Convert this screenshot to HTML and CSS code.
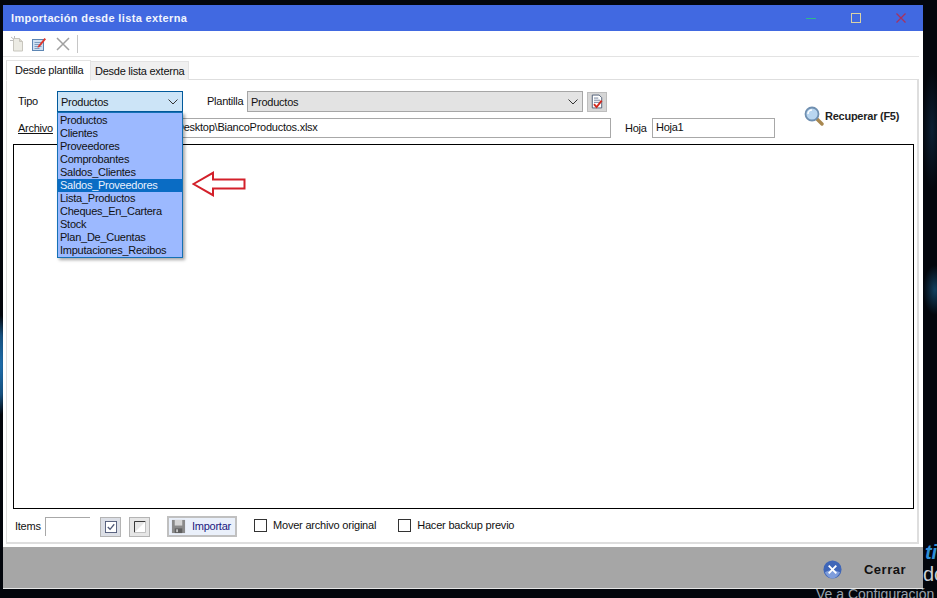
FILE: index.html
```html
<!DOCTYPE html>
<html lang="es">
<head>
<meta charset="utf-8">
<title>Importación desde lista externa</title>
<link rel="stylesheet" href="styles.css">
</head>
<body>
<div class="desktop">
  <span class="desk-ti">ti</span>
  <span class="desk-do">do</span>
  <span class="desk-ve">Ve a Configuración</span>
  <div class="window">
    <header class="titlebar">
      <span class="title">Importación desde lista externa</span>
      <div class="winctl">
        <svg class="ctl" viewBox="0 0 12 12"><path d="M1 6.500h10" stroke="#2fb98a" stroke-width="1"/></svg>
        <svg class="ctl" viewBox="0 0 12 12"><rect x="1.500" y="1.500" width="9" height="9" fill="none" stroke="#d9d2a6" stroke-width="1"/></svg>
        <svg class="ctl" viewBox="0 0 12 12"><path d="M1.500 1.500l9 9M10.500 1.500l-9 9" stroke="#a8325e" stroke-width="1.300"/></svg>
      </div>
    </header>
    <div class="toolbar">
      <svg class="tool" viewBox="0 0 16 16"><path d="M3.500 2.500h6l3 3v9.500h-9z" fill="#ecebe4" stroke="#c8c6be"/><path d="M9.500 2.500v3h3" fill="#dad8cf" stroke="#c8c6be"/><path d="M1 1l2.500 2M4.500 0v2.500M0 4.500h3" stroke="#bdbdbd"/></svg>
      <svg class="tool" viewBox="0 0 16 16"><rect x="1.500" y="3.500" width="11" height="11" fill="#cfe0f2" stroke="#5d86b4"/><path d="M3.500 6.500h7M3.500 8.500h7M3.500 10.500h7M3.500 12.500h5" stroke="#7d9cc0"/><path d="M7 10l6.500-8 1.500 1.200L8.500 11l-2 .8z" fill="#e0352b"/></svg>
      <svg class="tool tool-x" viewBox="0 0 16 16"><path d="M2 2l12 12M14 2L2 14" stroke="#a0a0a0" stroke-width="1.500"/></svg>
      <span class="tool-sep"></span>
    </div>
    <div class="tabs">
      <span class="tab tab-on">Desde plantilla</span>
      <span class="tab">Desde lista externa</span>
    </div>
    <main class="panel">
      <div class="head">
        <div class="fields">
          <div class="row row-top">
            <label class="lbl lbl-tipo">Tipo</label>
            <div class="combo combo-active"><span>Productos</span><svg class="chev" viewBox="0 0 10 6"><path d="M.5.5L5 5 9.500.5" fill="none" stroke="#333"/></svg></div>
            <label class="lbl lbl-plantilla">Plantilla</label>
            <div class="combo combo-gray"><span>Productos</span><svg class="chev" viewBox="0 0 10 6"><path d="M.5.5L5 5 9.500.5" fill="none" stroke="#333"/></svg></div>
            <button class="mini-btn">
              <svg class="mini-ico" viewBox="0 0 14 16"><path d="M1.500.5h8l3 3v12h-11z" fill="#fff" stroke="#3f4f6a"/><path d="M3.500 4h5M3.500 6.500h7M3.500 9h7" stroke="#5f7090"/><path d="M3.500 11l3 3.500L12.500 7" fill="none" stroke="#d2281e" stroke-width="2.200"/></svg>
            </button>
          </div>
          <div class="row row-file">
            <label class="lbl lbl-archivo">Archivo</label>
            <div class="input input-file">C:\Users\Administrador\Desktop\BiancoProductos.xlsx</div>
            <label class="lbl lbl-hoja">Hoja</label>
            <div class="input input-hoja">Hoja1</div>
          </div>
        </div>
        <div class="recuperar">
          <svg class="rec-ico" viewBox="0 0 20 20"><path d="M12 12l6 6" stroke="#a8874f" stroke-width="3.400" stroke-linecap="round"/><circle cx="8" cy="8" r="6.500" fill="#b9d6f0" stroke="#6f8fb0" stroke-width="1.800"/><path d="M4 8a4 4 0 0 1 4-4" fill="none" stroke="#fff" stroke-width="1.500"/></svg>
          <span>Recuperar (F5)</span>
        </div>
      </div>
      <div class="grid-box"></div>
      <div class="foot">
        <label class="lbl lbl-items">Items</label>
        <div class="items-input"></div>
        <button class="sq-btn"><svg class="sq-ico" viewBox="0 0 13 13"><rect x=".5" y=".5" width="12" height="12" fill="#fff" stroke="#505a78"/><path d="M3 6.500l2.500 2.500L10 3.500" fill="none" stroke="#505a78" stroke-width="1.400"/></svg></button>
        <button class="sq-btn sq-btn-2"><svg class="sq-ico" viewBox="0 0 13 13"><path d="M.5 12.500V.5h12" fill="none" stroke="#222"/><path d="M.5 12.500h12V.5" fill="#fff" stroke="#bbb"/></svg></button>
        <button class="import-btn">
          <svg class="imp-ico" viewBox="0 0 16 16"><path d="M1 1h14v14H1z" fill="#8a8a8a"/><path d="M4 1h8v6H4z" fill="#d5d5d5"/><path d="M4 10h8v5H4z" fill="#5f5f5f"/><path d="M5.500 11h2v3h-2z" fill="#c8c8c8"/></svg>
          <span>Importar</span>
        </button>
        <span class="check"></span>
        <span class="check-text">Mover archivo original</span>
        <span class="check check-2"></span>
        <span class="check-text">Hacer backup previo</span>
      </div>
    </main>
    <footer class="bottom">
      <svg class="close-ico" viewBox="0 0 20 20"><circle cx="10" cy="10" r="9.500" fill="#3f66b8"/><path d="M2 13c4-3 10-3 16 0-2 4-5 6.500-8 6.500S3.500 17 2 13z" fill="#7f9ddb"/><path d="M6 6l8 8M14 6l-8 8" stroke="#fff" stroke-width="2"/></svg>
      <span class="close-text">Cerrar</span>
    </footer>
  </div>
  <ul class="dropdown">
    <li>Productos</li>
    <li>Clientes</li>
    <li>Proveedores</li>
    <li>Comprobantes</li>
    <li>Saldos_Clientes</li>
    <li class="sel">Saldos_Proveedores</li>
    <li>Lista_Productos</li>
    <li>Cheques_En_Cartera</li>
    <li>Stock</li>
    <li>Plan_De_Cuentas</li>
    <li>Imputaciones_Recibos</li>
  </ul>
  <svg class="arrow" viewBox="0 0 54 26"><path d="M1.500 13L21 1.800v6.700h31.500v9H21v6.700z" fill="#fff" stroke="#d3202a" stroke-width="2"/></svg>
</div>
</body>
</html>
```
FILE: styles.css
```css
* { box-sizing: border-box; }
html, body { margin: 0; padding: 0; }
body { width: 937px; height: 598px; overflow: hidden; font-family: "Liberation Sans", Arial, sans-serif; font-size: 11px; letter-spacing: -.25px; color: #111; }
.desktop {
  position: relative; width: 937px; height: 598px; overflow: hidden;
  padding: 5px 14px 9px 3px; display: flex;
  background:
    radial-gradient(ellipse 6px 50px at 1px 365px, #1e6fae 0, rgba(30,111,174,.7) 60%, transparent 100%),
    radial-gradient(ellipse 12px 25px at 935px 290px, #12405f 0, transparent 100%),
    radial-gradient(ellipse 10px 60px at 932px 130px, #0c1f33 0, transparent 100%),
    #03060c;
}
.desk-ti { position: absolute; left: 925px; top: 541px; font: italic bold 20px "Liberation Sans", sans-serif; color: #2f8fd6; }
.desk-do { position: absolute; left: 923px; top: 563px; font-size: 20px; letter-spacing: 0; color: #c9ced6; }
.desk-ve { position: absolute; left: 816px; top: 586px; font-size: 14px; letter-spacing: 0; color: #9aa3ad; white-space: nowrap; }
.window { position: relative; width: 920px; height: 584px; background: #fff; display: flex; flex-direction: column; }
.titlebar { height: 26px; flex: none; background: #4169e1; display: flex; align-items: center; padding-left: 8px; }
.title { color: #f2f5fd; font-weight: bold; font-size: 11px; letter-spacing: .36px; }
.winctl { margin-left: auto; display: flex; gap: 33px; margin-right: 16px; }
.ctl { width: 12px; height: 12px; display: block; }
.toolbar { height: 26px; flex: none; display: flex; align-items: center; padding-left: 7px; gap: 5px; border-bottom: 1px solid #e3e3e3; margin-right: 4px; }
.tool { width: 16px; height: 16px; display: block; }
.tool-x { margin-left: 3px; }
.tool-sep { width: 1px; height: 18px; background: #c6c6c6; margin-left: 1px; }
.tabs { height: 23px; flex: none; display: flex; align-items: flex-end; padding-left: 3px; position: relative; z-index: 1; margin-bottom: -1px; }
.tab { height: 19px; padding: 3px 4px 0 4px; background: #f0f0f0; border: 1px solid #e3e3e3; border-bottom: none; border-left: none; width: 98px; white-space: nowrap; }
.tab-on { height: 21px; width: 85px; padding: 3px 0 0 8px; background: #fff; border-left: 1px solid #dcdcdc; border-bottom: 1px solid #fff; margin-bottom: -1px; }
.panel { flex: 1; min-height: 0; margin: 0 4px 3px 3px; border: 1px solid #dedede; border-width: 1px 2px 2px 1px; padding: 11px 0 0 6px; display: flex; flex-direction: column; background: #fff; }
.head { display: flex; height: 53px; flex: none; position: relative; }
.fields { width: 770px; flex: none; display: flex; flex-direction: column; gap: 6px; }
.row { display: flex; align-items: center; }
.row-top { height: 21px; }
.row-file { height: 20px; }
.lbl { display: block; white-space: nowrap; }
.lbl-tipo { width: 44px; padding-left: 5px; position: relative; top: -1px; }
.lbl-plantilla { margin-left: 24px; width: 40px; position: relative; top: -1px; }
.combo { height: 21px; display: flex; align-items: center; justify-content: space-between; padding: 0 4px 0 3px; }
.combo-active { width: 126px; background: #cce4f7; border: 1px solid #015a9c; }
.combo-gray { width: 336px; background: #e3e3e3; border: 1px solid #a6a6a6; }
.chev { width: 10px; height: 6px; display: block; }
.mini-btn { width: 20px; height: 20px; margin-left: 4px; padding: 0; background: #d6d6d6; border: 1px solid #bdbdbd; display: flex; align-items: center; justify-content: center; }
.mini-ico { width: 12px; height: 15px; display: block; }
.lbl-archivo { width: 44px; padding-left: 5px; text-decoration: underline; }
.input { height: 20px; border: 1px solid #a8a8a8; background: #fff; padding: 2px 0 0 3px; white-space: nowrap; overflow: hidden; }
.input-file { width: 554px; padding-left: 7px; }
.lbl-hoja { margin-left: 14px; width: 27px; }
.input-hoja { width: 123px; }
.recuperar { position: absolute; left: 791px; top: 15px; display: flex; align-items: center; gap: 1px; font-weight: bold; font-size: 11px; color: #1f1f1f; white-space: nowrap; }
.rec-ico { width: 20px; height: 20px; display: block; }
.grid-box { flex: none; height: 365px; width: 901px; border: 1px solid #000; background: #fff; }
.foot { flex: none; display: flex; align-items: center; height: 33px; padding-top: 2px; }
.lbl-items { width: 32px; padding-left: 2px; position: relative; top: -1px; }
.items-input { width: 45px; height: 19px; border-top: 1px solid #a8a8a8; border-left: 1px solid #a8a8a8; }
.sq-btn { width: 21px; height: 20px; margin-left: 10px; padding: 0; background: #dcdfe6; border: 1px solid #b4b4b4; display: flex; align-items: center; justify-content: center; }
.sq-btn-2 { margin-left: 8px; background: #e6e6e6; }
.sq-ico { width: 12px; height: 12px; display: block; }
.import-btn { width: 70px; height: 21px; margin-left: 17px; padding: 0 0 1px 2px; background: #eaf0fa; border: 2px solid #c0c0c0; display: flex; align-items: center; gap: 6px; color: #1a1a80; font: 11px "Liberation Sans", sans-serif; letter-spacing: -.25px; }
.imp-ico { width: 15px; height: 15px; display: block; }
.check { width: 13px; height: 13px; border: 1px solid #333; background: #fff; margin-left: 17px; flex: none; position: relative; top: -1px; }
.check-2 { margin-left: 22px; }
.check-text { margin-left: 6px; white-space: nowrap; position: relative; top: -2px; letter-spacing: -.2px; }
.bottom { height: 42px; flex: none; background: #a6a6a6; display: flex; align-items: center; justify-content: flex-end; padding: 3px 17px 0 0; gap: 22px; border-bottom: 1px solid #e6e6e6; }
.close-ico { width: 19px; height: 19px; display: block; }
.close-text { font-weight: bold; font-size: 13px; letter-spacing: .5px; color: #111; }
.dropdown { position: absolute; left: 57px; top: 112px; width: 126px; height: 146px; margin: 0; padding: 1px 0 0; list-style: none; background: #9cb9ff; border: 1px solid #1571b5; box-shadow: 2px 2px 3px rgba(0,0,0,.35); }
.dropdown li { height: 13px; line-height: 13px; padding-left: 2px; font-size: 11px; white-space: nowrap; }
.dropdown .sel { background: #0a6cc4; color: #e8f1ff; }
.arrow { position: absolute; left: 192px; top: 171px; width: 54px; height: 26px; display: block; }
```
